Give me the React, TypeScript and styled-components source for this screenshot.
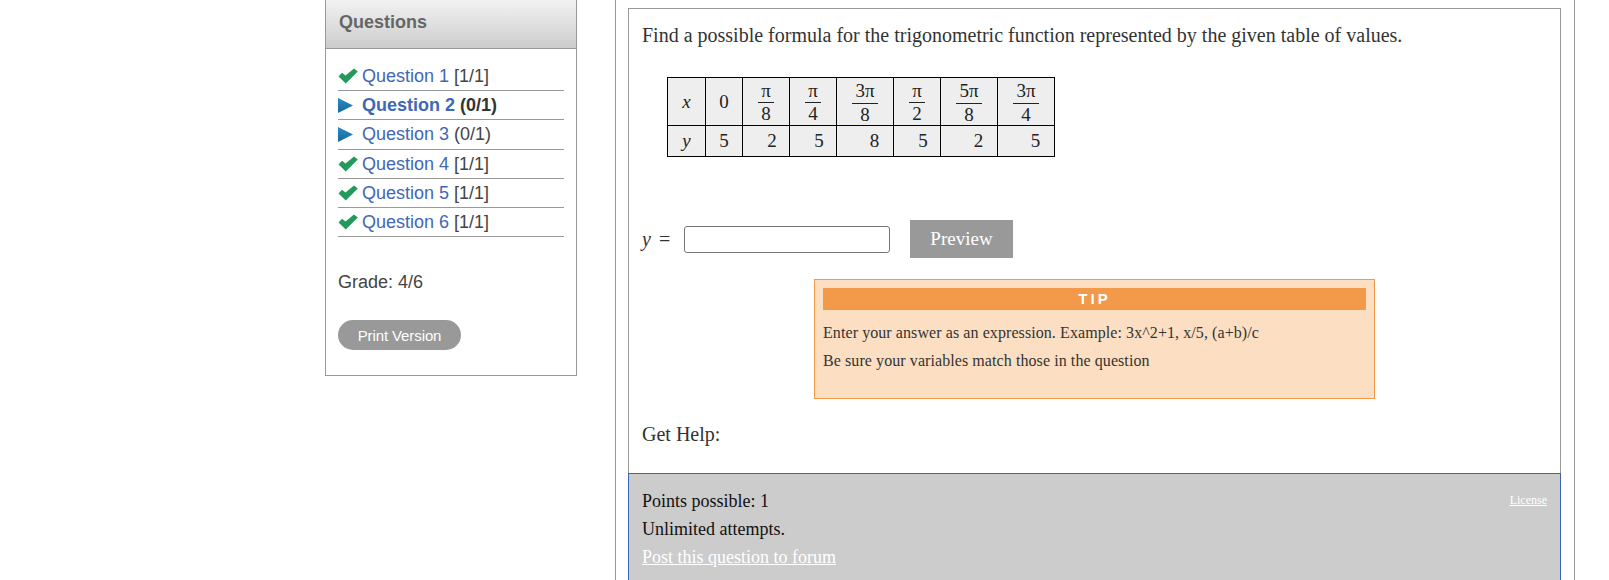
import React from 'react'
import styled, { createGlobalStyle } from 'styled-components'

const GlobalStyle = createGlobalStyle`
  html, body {
    margin: 0;
    height: 580px;
    overflow: hidden;
    background: #fff;
  }
`

const Page = styled.div`
  display: flex;
  align-items: flex-start;
  gap: 38px;
  padding-left: 325px;
  height: 580px;
`

const Sidebar = styled.aside`
  width: 252px;
  height: 376px;
  box-sizing: border-box;
  flex: none;
  border: 1px solid #999;
  border-top: none;
  font-family: 'Liberation Sans', Arial, sans-serif;
`

const SideHeader = styled.div`
  height: 49px;
  box-sizing: border-box;
  padding: 12px 12px 0 13px;
  border-bottom: 1px solid #999;
  background: linear-gradient(#f2f2f2, #cccccc);
  color: #666;
  font-size: 18px;
  line-height: 21px;
  font-weight: bold;
`

const SideBody = styled.div`
  padding: 13px 12px 0;
`

const QuestionList = styled.ul`
  list-style: none;
  margin: 0;
  padding: 0;
`

const QuestionRow = styled.li<{ $tall?: boolean }>`
  display: flex;
  align-items: center;
  height: ${(p) => (p.$tall ? 30 : 29)}px;
  box-sizing: border-box;
  border-bottom: 1px solid #999;
  font-size: 18px;
  color: #444;
`

const RowIcon = styled.span`
  width: 24px;
  flex: none;
  display: flex;
  align-items: center;
`

const QuestionLink = styled.a<{ $current?: boolean }>`
  color: #4068b4;
  margin-right: 5px;
  font-weight: ${(p) => (p.$current ? 'bold' : 'normal')};
`

const Score = styled.span<{ $current?: boolean }>`
  font-weight: ${(p) => (p.$current ? 'bold' : 'normal')};
  color: ${(p) => (p.$current ? '#333' : '#444')};
`

const Grade = styled.div`
  margin-top: 35px;
  font-size: 18px;
  line-height: 21px;
  color: #444;
`

const PrintButton = styled.button`
  display: block;
  margin-top: 27px;
  width: 123px;
  height: 30px;
  padding: 0;
  border: none;
  border-radius: 15px;
  background: #999;
  color: #fff;
  font-family: inherit;
  font-size: 15px;
  letter-spacing: -0.1px;
`

const MainColumn = styled.main`
  width: 960px;
  height: 580px;
  box-sizing: border-box;
  flex: none;
  padding: 8px 13px 0 12px;
  border-left: 1px solid #999;
  border-right: 1px solid #999;
  font-family: 'Liberation Serif', 'Times New Roman', serif;
  color: #333;
`

const QuestionBox = styled.section`
  height: 572px;
  display: flex;
  flex-direction: column;
  box-sizing: border-box;
  border: 1px solid #999;
  border-bottom: none;
`

const QuestionContent = styled.div`
  height: 464px;
  box-sizing: border-box;
  padding: 15px 13px 0;
  flex: none;
`

const Prompt = styled.p`
  margin: 0;
  font-size: 20px;
  line-height: 23px;
`

const ValueTable = styled.table`
  border-collapse: collapse;
  margin: 30px 0 0 25px;
  background: #eee;
  table-layout: fixed;
  width: 387px;
  font-size: 19px;
  color: #222;
`

const Cell = styled.td<{ $shift?: number }>`
  border: 1px solid #000;
  padding: 0 0 0 ${(p) => p.$shift ?? 0}px;
  text-align: center;
  vertical-align: middle;
`

const HeadRow = styled.tr`
  height: 48px;
`

const ValueRow = styled.tr`
  height: 31px;
`

const Var = styled.i`
  font-style: italic;
`

const Fraction = styled.span`
  display: inline-flex;
  flex-direction: column;
  align-items: center;
  line-height: 21px;
`

const Numerator = styled.span<{ $wide?: boolean }>`
  display: block;
  min-width: 16px;
  padding: 0 ${(p) => (p.$wide ? 3 : 0)}px;
  border-bottom: 1px solid #222;
  line-height: ${(p) => (p.$wide ? 25 : 22)}px;
`

const AnswerRow = styled.div`
  display: flex;
  align-items: center;
  margin-top: 63px;
  font-size: 20px;
`

const AnswerLabel = styled.span`
  width: 42px;
  flex: none;
  word-spacing: 3px;
`

const AnswerInput = styled.input`
  width: 206px;
  height: 27px;
  box-sizing: border-box;
  padding: 0 4px;
  border: 1px solid #767676;
  border-radius: 3px;
`

const PreviewButton = styled.button`
  margin-left: 20px;
  width: 103px;
  height: 38px;
  padding: 0;
  border: none;
  background: #999;
  color: #fff;
  font-family: inherit;
  font-size: 19px;
`

const TipBox = styled.div`
  margin: 21px 0 0 172px;
  width: 561px;
  height: 120px;
  box-sizing: border-box;
  padding: 8px;
  border: 1px solid #f2994a;
  background: #fcdfc2;
  color: #333;
  font-size: 16px;
  letter-spacing: 0.08px;
`

const TipTitle = styled.div`
  height: 22px;
  background: #f2994a;
  color: #fff;
  font-family: 'Liberation Sans', Arial, sans-serif;
  font-size: 15px;
  font-weight: bold;
  letter-spacing: 3px;
  line-height: 21px;
  text-align: center;
`

const TipLine = styled.p`
  margin: 14px 0 0;
  line-height: 17px;
  & + & {
    margin-top: 11px;
  }
`

const GetHelp = styled.div`
  margin-top: 24px;
  font-size: 20px;
  line-height: 23px;
`

const InfoBar = styled.div`
  flex: 1;
  position: relative;
  box-sizing: border-box;
  padding: 15px 13px 0;
  margin: 0 -1px;
  border: 1px solid #3b66b5;
  border-bottom: none;
  background: #ccc;
  color: #111;
  font-size: 18px;
`

const InfoLine = styled.div`
  height: 28px;
  line-height: 24px;
`

const WhiteLink = styled.a`
  color: #fff;
  text-decoration: underline;
`

const LicenseLink = styled(WhiteLink)`
  position: absolute;
  top: 19px;
  right: 13px;
  font-size: 12px;
`

const GreenCheck = () => (
  <svg width="20" height="16" viewBox="0 0 20 16">
    <path d="M0.5 8.5 L4 4.8 L7.5 7.6 L16 0.5 L19.8 3.6 L7.8 15.5 Z" fill="#229a5c" />
  </svg>
)

const BlueArrow = () => (
  <svg width="15" height="15" viewBox="0 0 15 15">
    <defs>
      <linearGradient id="arrowFill" x1="0" y1="0" x2="0" y2="1">
        <stop offset="0" stopColor="#2a8cc4" />
        <stop offset="1" stopColor="#14699c" />
      </linearGradient>
    </defs>
    <path d="M0 0 L15 7.5 L0 15 Z" fill="url(#arrowFill)" />
  </svg>
)

const questions = [
  { n: 1, score: '[1/1]', done: true },
  { n: 2, score: '(0/1)', current: true },
  { n: 3, score: '(0/1)', tall: true },
  { n: 4, score: '[1/1]', done: true },
  { n: 5, score: '[1/1]', done: true },
  { n: 6, score: '[1/1]', done: true },
]

const columns = [38, 37, 47, 47, 57, 47, 57, 57]

const headCells = [
  ['π', '8'],
  ['π', '4'],
  ['3π', '8'],
  ['π', '2'],
  ['5π', '8'],
  ['3π', '4'],
]

const rowValues = [
  { v: 5, shift: 0 },
  { v: 2, shift: 12 },
  { v: 5, shift: 12 },
  { v: 8, shift: 19 },
  { v: 5, shift: 12 },
  { v: 2, shift: 19 },
  { v: 5, shift: 19 },
]

const App: React.FC = () => (
  <>
    <GlobalStyle />
    <Page>
      <Sidebar>
        <SideHeader>Questions</SideHeader>
        <SideBody>
          <QuestionList>
            {questions.map((q) => (
              <QuestionRow key={q.n} $tall={q.tall}>
                <RowIcon>{q.done ? <GreenCheck /> : <BlueArrow />}</RowIcon>
                <QuestionLink $current={q.current}>Question {q.n}</QuestionLink>
                <Score $current={q.current}>{q.score}</Score>
              </QuestionRow>
            ))}
          </QuestionList>
          <Grade>Grade: 4/6</Grade>
          <PrintButton>Print Version</PrintButton>
        </SideBody>
      </Sidebar>
      <MainColumn>
        <QuestionBox>
          <QuestionContent>
            <Prompt>Find a possible formula for the trigonometric function represented by the given table of values.</Prompt>
            <ValueTable>
              <colgroup>
                {columns.map((w, i) => (
                  <col key={i} width={w} />
                ))}
              </colgroup>
              <tbody>
                <HeadRow>
                  <Cell><Var>x</Var></Cell>
                  <Cell>0</Cell>
                  {headCells.map(([top, bottom], i) => (
                    <Cell key={i}>
                      <Fraction>
                        <Numerator $wide={top.length > 1}>{top}</Numerator>
                        {bottom}
                      </Fraction>
                    </Cell>
                  ))}
                </HeadRow>
                <ValueRow>
                  <Cell><Var>y</Var></Cell>
                  {rowValues.map((c, i) => (
                    <Cell key={i} $shift={c.shift}>{c.v}</Cell>
                  ))}
                </ValueRow>
              </tbody>
            </ValueTable>
            <AnswerRow>
              <AnswerLabel><Var>y</Var> =</AnswerLabel>
              <AnswerInput />
              <PreviewButton>Preview</PreviewButton>
            </AnswerRow>
            <TipBox>
              <TipTitle>TIP</TipTitle>
              <TipLine>Enter your answer as an expression. Example: 3x^2+1, x/5, (a+b)/c</TipLine>
              <TipLine>Be sure your variables match those in the question</TipLine>
            </TipBox>
            <GetHelp>Get Help:</GetHelp>
          </QuestionContent>
          <InfoBar>
            <LicenseLink>License</LicenseLink>
            <InfoLine>Points possible: 1</InfoLine>
            <InfoLine>Unlimited attempts.</InfoLine>
            <InfoLine><WhiteLink>Post this question to forum</WhiteLink></InfoLine>
          </InfoBar>
        </QuestionBox>
      </MainColumn>
    </Page>
  </>
)

export default App
